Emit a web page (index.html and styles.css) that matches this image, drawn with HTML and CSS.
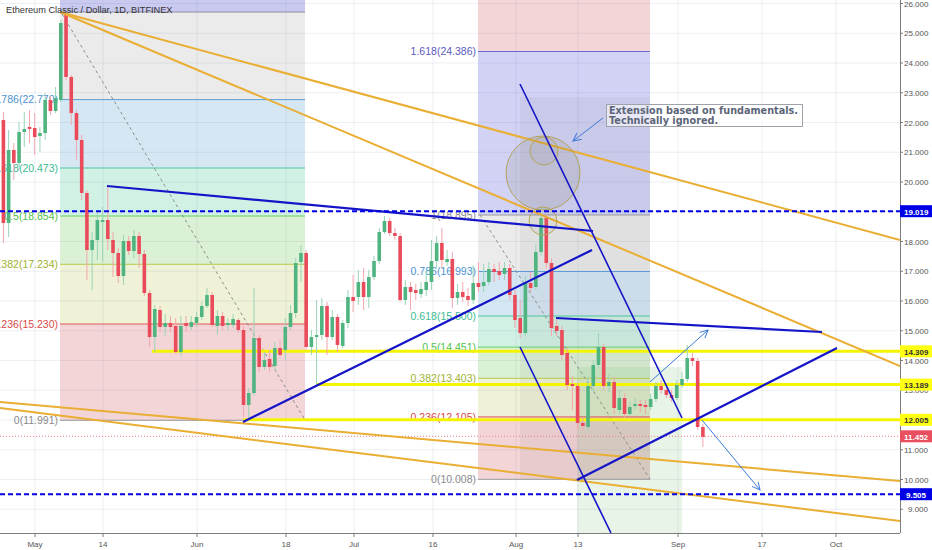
FILE: index.html
```html
<!DOCTYPE html>
<html lang="en">
<head>
<meta charset="utf-8">
<title>Ethereum Classic / Dollar, 1D, BITFINEX</title>
<link rel="stylesheet" href="styles.css">
</head>
<body>
<div class="chart">
  <div class="pane">
    <svg class="plot" id="plot" width="900" height="533" viewBox="0 0 900 533">
      <defs>
        <marker id="arr" markerWidth="10" markerHeight="10" refX="8" refY="4" orient="auto" markerUnits="userSpaceOnUse">
          <path d="M0,0 L8,4 L0,8" class="arrow-head"/>
        </marker>
      </defs>

      <!-- Fibonacci retracement (May - Jun) -->
      <g class="fib">
        <rect x="60" y="0" width="245" height="12" class="z-purple"/>
        <rect x="60" y="12" width="245" height="87.6" class="z-gray"/>
        <rect x="60" y="99.6" width="245" height="68.4" class="z-blue"/>
        <rect x="60" y="168" width="245" height="48" class="z-teal"/>
        <rect x="60" y="216" width="245" height="48.3" class="z-green"/>
        <rect x="60" y="264.3" width="245" height="59.7" class="z-lime"/>
        <rect x="60" y="324" width="245" height="96.3" class="z-pink"/>
      </g>

      <!-- Fibonacci extension (Jul - Aug) -->
      <g class="fib">
        <rect x="478" y="0" width="172" height="51.5" class="z-pink"/>
        <rect x="478" y="51.5" width="172" height="163.5" class="z-violet"/>
        <rect x="478" y="215" width="172" height="56.5" class="z-gray"/>
        <rect x="478" y="271.5" width="172" height="44.5" class="z-blue"/>
        <rect x="478" y="316" width="172" height="31.1" class="z-teal"/>
        <rect x="478" y="347.1" width="172" height="31.2" class="z-green"/>
        <rect x="478" y="378.3" width="172" height="38.6" class="z-lime"/>
        <rect x="478" y="416.9" width="172" height="62.4" class="z-pink"/>
      </g>

      <rect x="520" y="97" width="130" height="382" class="shade-gray"/>
      <rect x="577" y="367" width="105" height="166" class="shade-green"/>

      <g id="grid" class="grid"></g>

      <g class="fib-lines">
        <line x1="60" y1="12" x2="305" y2="12" class="l-one"/>
        <line x1="60" y1="99.6" x2="305" y2="99.6" class="l-blue"/>
        <line x1="60" y1="168" x2="305" y2="168" class="l-teal"/>
        <line x1="60" y1="216" x2="305" y2="216" class="l-green"/>
        <line x1="60" y1="264.3" x2="305" y2="264.3" class="l-lime"/>
        <line x1="60" y1="324" x2="305" y2="324" class="l-red"/>
        <line x1="60" y1="420.3" x2="305" y2="420.3" class="l-zero"/>

        <line x1="478" y1="51.5" x2="650" y2="51.5" class="l-violet"/>
        <line x1="478" y1="215" x2="650" y2="215" class="l-zero"/>
        <line x1="478" y1="271.5" x2="650" y2="271.5" class="l-blue"/>
        <line x1="478" y1="316" x2="650" y2="316" class="l-teal"/>
        <line x1="478" y1="347.1" x2="650" y2="347.1" class="l-green"/>
        <line x1="478" y1="378.3" x2="650" y2="378.3" class="l-lime"/>
        <line x1="478" y1="416.9" x2="650" y2="416.9" class="l-red"/>
        <line x1="478" y1="479.3" x2="650" y2="479.3" class="l-zero"/>
      </g>

      <g class="fib-labels">
        <text x="58" y="103.3" class="t-blue">0.786(22.770)</text>
        <text x="58" y="171.7" class="t-teal">0.618(20.473)</text>
        <text x="58" y="219.7" class="t-green">0.5(18.854)</text>
        <text x="58" y="268" class="t-lime">0.382(17.234)</text>
        <text x="58" y="327.7" class="t-red">0.236(15.230)</text>
        <text x="58" y="424" class="t-zero">0(11.991)</text>

        <text x="476" y="55.2" class="t-violet">1.618(24.386)</text>
        <text x="476" y="218.7" class="t-zero">1(18.895)</text>
        <text x="476" y="275.2" class="t-blue">0.786(16.993)</text>
        <text x="476" y="319.7" class="t-teal">0.618(15.500)</text>
        <text x="476" y="350.8" class="t-green">0.5(14.451)</text>
        <text x="476" y="382" class="t-lime">0.382(13.403)</text>
        <text x="476" y="420.6" class="t-red">0.236(12.105)</text>
        <text x="476" y="483" class="t-zero">0(10.008)</text>
      </g>

      <line x1="62" y1="14" x2="305" y2="420" class="fib-trend"/>
      <line x1="480" y1="215" x2="650" y2="479" class="fib-trend"/>

      <!-- horizontal levels -->
      <line x1="152" y1="351.3" x2="900" y2="351.3" class="level-yellow"/>
      <line x1="316" y1="384.6" x2="900" y2="384.6" class="level-yellow"/>
      <line x1="243" y1="419.8" x2="900" y2="419.8" class="level-yellow"/>

      <g id="candles"></g>

      <line x1="0" y1="436.3" x2="900" y2="436.3" class="last-price"/>

      <!-- trend lines -->
      <line x1="60" y1="12" x2="900" y2="240" class="trend-gold"/>
      <line x1="60" y1="12" x2="900" y2="366" class="trend-gold"/>
      <line x1="0" y1="402" x2="900" y2="481" class="trend-gold"/>
      <line x1="0" y1="408" x2="900" y2="521" class="trend-gold"/>

      <!-- circles -->
      <circle cx="543" cy="173" r="37" class="ring"/>
      <circle cx="544" cy="151" r="14" class="ring-small"/>
      <circle cx="543" cy="221" r="14" class="ring-small"/>

      <!-- blue lines -->
      <line x1="107" y1="186" x2="593" y2="231" class="trend-blue"/>
      <line x1="243" y1="422" x2="592" y2="250" class="trend-blue"/>
      <line x1="520" y1="84" x2="682" y2="418" class="trend-blue thin"/>
      <line x1="520" y1="347" x2="611" y2="533" class="trend-blue thin"/>
      <line x1="556" y1="318" x2="822" y2="332" class="trend-blue"/>
      <line x1="577" y1="480" x2="837" y2="348" class="trend-blue"/>

      <line x1="0" y1="211.2" x2="900" y2="211.2" class="level-blue"/>
      <line x1="0" y1="494.2" x2="900" y2="494.2" class="level-blue"/>

      <!-- arrows -->
      <line x1="603" y1="118" x2="573" y2="141" class="arrow" marker-end="url(#arr)"/>
      <line x1="650" y1="382" x2="708" y2="330" class="arrow" marker-end="url(#arr)"/>
      <line x1="702" y1="420" x2="760" y2="490" class="arrow" marker-end="url(#arr)"/>
    </svg>
    <div class="legend">Ethereum Classic / Dollar, 1D, BITFINEX</div>
    <div class="note">Extension based on fundamentals.<br>Technically ignored.</div>
  </div>
  <svg class="price-axis" id="paxis" width="32" height="533" viewBox="0 0 32 533">
    <line x1="0.5" y1="0" x2="0.5" y2="533" class="axis-line"/>
    <g id="ptext"></g>
    <g class="badge b-blue"><rect x="0" y="205.2" width="32" height="12"/><text x="4" y="214.5">19.019</text></g>
    <g class="badge b-yellow"><rect x="0" y="345.3" width="32" height="12"/><text x="4" y="354.6">14.309</text></g>
    <g class="badge b-yellow"><rect x="0" y="378.6" width="32" height="12"/><text x="4" y="387.9">13.189</text></g>
    <g class="badge b-yellow"><rect x="0" y="413.8" width="32" height="12"/><text x="4" y="423.1">12.005</text></g>
    <g class="badge b-red"><rect x="0" y="430.3" width="32" height="12"/><text x="4" y="439.6">11.452</text></g>
    <g class="badge b-blue"><rect x="0" y="488.2" width="32" height="12"/><text x="6" y="497.5">9.505</text></g>
  </svg>
  <svg class="time-axis" width="900" height="17" viewBox="0 0 900 17">
    <line x1="0" y1="0.5" x2="900" y2="0.5" class="axis-line"/>
    <g class="ticks">
      <line x1="35" y1="0" x2="35" y2="4"/><line x1="103" y1="0" x2="103" y2="4"/>
      <line x1="197" y1="0" x2="197" y2="4"/><line x1="286" y1="0" x2="286" y2="4"/>
      <line x1="354" y1="0" x2="354" y2="4"/><line x1="433" y1="0" x2="433" y2="4"/>
      <line x1="516" y1="0" x2="516" y2="4"/><line x1="578" y1="0" x2="578" y2="4"/>
      <line x1="678" y1="0" x2="678" y2="4"/><line x1="762" y1="0" x2="762" y2="4"/>
      <line x1="836" y1="0" x2="836" y2="4"/>
    </g>
    <g class="tlabels">
      <text x="35" y="13.5">May</text><text x="103" y="13.5">14</text>
      <text x="197" y="13.5">Jun</text><text x="286" y="13.5">18</text>
      <text x="354" y="13.5">Jul</text><text x="433" y="13.5">16</text>
      <text x="516" y="13.5">Aug</text><text x="578" y="13.5">13</text>
      <text x="678" y="13.5">Sep</text><text x="762" y="13.5">17</text>
      <text x="836" y="13.5">Oct</text>
    </g>
  </svg>
  <div class="corner"></div>
</div>
<script src="script.js"></script>
</body>
</html>
```

FILE: styles.css
```css
html, body {
  margin: 0;
  padding: 0;
  background: #ffffff;
}
body {
  font-family: "Liberation Sans", Arial, sans-serif;
}
.chart {
  display: grid;
  grid-template-columns: 900px 32px;
  grid-template-rows: 533px 17px;
  width: 932px;
  height: 550px;
  overflow: hidden;
}
.pane {
  position: relative;
  overflow: hidden;
}
.plot, .price-axis, .time-axis {
  display: block;
  overflow: hidden;
}

/* fib zones */
.z-purple { fill: #cacaf1; }
.z-violet { fill: #d2d2f5; }
.z-gray   { fill: #ebebeb; }
.z-blue   { fill: #d6e7f4; }
.z-teal   { fill: #d2f1e5; }
.z-green  { fill: #dbf1d5; }
.z-lime   { fill: #eff2d7; }
.z-pink   { fill: #f4d5d7; }
.shade-gray  { fill: rgba(90, 90, 90, 0.07); }
.shade-green { fill: rgba(120, 185, 120, 0.16); }

.grid line { stroke: rgba(110, 130, 160, 0.13); stroke-width: 1; }

.fib-lines line { stroke-width: 1; }
.l-one    { stroke: #8c8ca6; }
.l-violet { stroke: #6a6ad0; }
.l-blue   { stroke: #5c9cd6; }
.l-teal   { stroke: #4fc6a0; }
.l-green  { stroke: #66cf5f; }
.l-lime   { stroke: #b5c84a; }
.l-red    { stroke: #e05858; }
.l-zero   { stroke: #9a9a9a; }

.fib-labels text {
  font-family: "Liberation Sans", Arial, sans-serif;
  font-size: 10.5px;
  text-anchor: end;
}
.t-violet { fill: #5a5ac0; }
.t-blue   { fill: #4d93d2; }
.t-teal   { fill: #3dbb92; }
.t-green  { fill: #50c24c; }
.t-lime   { fill: #9fb232; }
.t-red    { fill: #d94a4a; }
.t-zero   { fill: #8a8a8a; }

.fib-trend {
  stroke: #8d8d8d;
  stroke-width: 1;
  stroke-dasharray: 3 3;
}

.level-yellow { stroke: #f4f400; stroke-width: 3; }
.level-blue { stroke: #0000e6; stroke-width: 2; stroke-dasharray: 5 3; }
.last-price { stroke: #ee7b85; stroke-width: 1; stroke-dasharray: 1 2; }

.trend-gold { stroke: #e9ae33; stroke-width: 2; }
.trend-blue { stroke: #1414c8; stroke-width: 2.2; }
.trend-blue.thin { stroke-width: 1.6; }

.ring { fill: rgba(130, 130, 100, 0.14); stroke: #b3a45c; stroke-width: 1; }
.ring-small { fill: rgba(130, 130, 100, 0.06); stroke: #b3a45c; stroke-width: 1; }

.arrow { stroke: #3b78d8; stroke-width: 1; }
.arrow-head { fill: none; stroke: #3b78d8; stroke-width: 1; }

/* candles */
.c-up { fill: #4fb480; }
.c-dn { fill: #e94b5a; }
.w-up { stroke: #9ad4b6; stroke-width: 1; }
.w-dn { stroke: #f3a6ad; stroke-width: 1; }

/* overlays */
.legend {
  position: absolute;
  left: 6px;
  top: 5px;
  font-size: 9.2px;
  line-height: 11px;
  color: #333333;
  white-space: nowrap;
}
.note {
  position: absolute;
  left: 606px;
  top: 104px;
  width: 197px;
  height: 23px;
  box-sizing: border-box;
  border: 1px solid #9ea3ab;
  background: rgba(255, 255, 255, 0.55);
  padding: 1px 0 0 2px;
  font-family: "DejaVu Sans", Verdana, sans-serif;
  font-weight: bold;
  font-size: 9.7px;
  line-height: 10px;
  color: #5c6578;
  white-space: nowrap;
}

/* axes */
.axis-line { stroke: #7c7c7c; stroke-width: 1; }
.ptick { stroke: #7c7c7c; stroke-width: 1; }
.price-axis text, .time-axis text {
  font-family: "Liberation Sans", Arial, sans-serif;
  font-size: 8px;
  fill: #555;
}
.tlabels text { text-anchor: middle; }
.ticks line { stroke: #7c7c7c; stroke-width: 1; }
.badge text { font-weight: bold; font-size: 8px; }
.b-blue rect { fill: #0000e6; }
.b-blue text { fill: #ffffff; }
.b-yellow rect { fill: #ffff14; }
.b-yellow text { fill: #333333; }
.b-red rect { fill: #e9505f; }
.b-red text { fill: #ffffff; }
.corner { background: #ffffff; }
```

FILE: script.js
```js
(function () {
  var NS = 'http://www.w3.org/2000/svg';
  function el(name, attrs, parent) {
    var e = document.createElementNS(NS, name);
    for (var k in attrs) e.setAttribute(k, attrs[k]);
    parent.appendChild(e);
    return e;
  }

  // grid
  var grid = document.getElementById('grid');
  var vx = [35, 103, 197, 286, 354, 433, 516, 578, 678, 762, 836];
  vx.forEach(function (x) { el('line', { x1: x, y1: 0, x2: x, y2: 533 }, grid); });
  for (var k = 0; k <= 17; k++) {
    var y = 3.5 + k * 29.75;
    el('line', { x1: 0, y1: y, x2: 900, y2: y }, grid);
  }

  // price axis
  var pt = document.getElementById('ptext');
  for (var j = 0; j <= 17; j++) {
    var yy = 3.5 + j * 29.75;
    var p = 26 - j;
    el('line', { x1: 0, y1: yy, x2: 3, y2: yy, 'class': 'ptick' }, pt);
    var t = el('text', { x: p >= 10 ? 4 : 8, y: yy + 3 }, pt);
    t.textContent = p.toFixed(3);
  }

  // candles: [bodyTop, bodyBottom, high, low, up]
  var C = [
    [120,223,112,243,0],[150,223,130,237,1],[150,163,143,180,0],[132,163,122,170,1],
    [129,132,112,147,1],[127,129,110,143,0],[128,137,113,155,0],[133,136,127,152,1],
    [100,133,93,140,1],[100,111,96,115,0],[98,111,87,113,1],[23,100,20,102,1],
    [15,77,13,80,0],[77,113,75,125,0],[113,140,110,160,0],[140,193,135,200,0],
    [193,250,190,280,0],[240,250,232,290,1],[220,240,210,260,1],[220,222,207,262,1],
    [220,239,185,250,0],[240,253,232,277,0],[253,276,248,283,0],[241,276,235,285,1],
    [241,251,236,255,0],[236,251,230,258,1],[236,254,232,268,0],[254,293,250,296,0],
    [293,337,290,347,0],[309,337,305,352,1],[310,327,306,332,0],[323,327,314,336,1],
    [323,327,316,332,0],[326,352,318,354,0],[326,352,316,356,1],[323,326,316,332,0],
    [322,327,316,330,1],[317,323,312,327,1],[306,317,302,320,1],[295,306,288,308,1],
    [295,325,292,327,0],[316,326,310,335,1],[316,326,312,330,0],[323,325,318,330,1],
    [319,325,314,328,1],[320,330,318,333,0],[330,405,326,417,0],[393,405,388,418,1],
    [338,393,288,396,1],[338,367,335,372,0],[360,367,352,370,1],[359,367,350,372,0],
    [348,366,342,370,1],[348,355,340,358,0],[327,350,318,360,1],[313,327,305,330,1],
    [263,313,258,318,1],[253,262,245,282,1],[253,347,250,350,0],[337,347,330,355,1],
    [335,337,300,385,1],[306,335,298,340,1],[306,337,302,355,0],[317,337,310,340,1],
    [317,345,314,352,0],[323,346,320,348,1],[297,323,290,328,1],[297,301,275,312,0],
    [282,297,270,305,1],[282,297,268,310,0],[277,297,270,308,1],[261,277,256,280,1],
    [232,261,228,264,1],[221,232,216,234,1],[221,233,218,236,0],[233,236,228,240,0],
    [236,300,233,302,0],[287,300,280,305,1],[287,292,282,310,0],[290,293,284,300,0],
    [289,294,282,298,1],[282,290,270,296,1],[261,282,240,290,1],[243,261,236,268,1],
    [243,260,228,268,0],[259,262,250,266,1],[259,298,252,308,0],[292,298,284,305,1],
    [292,297,282,302,0],[296,300,288,306,0],[283,300,265,304,1],[283,287,262,292,0],
    [282,286,264,292,1],[269,282,262,285,1],[269,272,264,282,0],[271,275,262,280,0],
    [268,274,262,280,1],[268,295,264,300,0],[295,320,290,328,0],[318,333,300,338,0],
    [283,333,276,336,1],[283,288,272,292,0],[252,287,244,290,1],[218,252,214,256,1],
    [218,263,213,268,0],[263,328,258,336,0],[326,331,318,336,0],[330,355,326,360,0],
    [353,385,348,390,0],[384,386,376,410,0],[386,423,383,430,0],[423,426,418,430,0],
    [386,427,376,430,1],[365,386,360,392,1],[347,365,333,368,1],[347,386,344,390,0],
    [382,386,374,392,1],[382,408,377,414,0],[398,410,390,414,1],[398,414,393,418,0],
    [407,414,402,416,1],[404,406,398,410,1],[404,406,400,412,0],[405,407,400,414,0],
    [399,407,394,410,1],[386,399,382,402,1],[386,390,380,394,0],[390,395,386,398,0],
    [395,398,390,402,0],[385,398,380,400,1],[379,385,372,388,1],[358,379,345,382,1],
    [358,361,353,366,0],[361,427,358,430,0],[427,437,424,447,0]
  ];
  var g = document.getElementById('candles');
  C.forEach(function (c, i) {
    var x = 3.4 + i * 5.22;
    var up = c[4] === 1;
    el('line', { x1: x, y1: c[2], x2: x, y2: c[3], 'class': up ? 'w-up' : 'w-dn' }, g);
    var h = Math.max(c[1] - c[0], 1.5);
    el('rect', { x: x - 1.8, y: c[0], width: 3.6, height: h, 'class': up ? 'c-up' : 'c-dn' }, g);
  });
})();
```
